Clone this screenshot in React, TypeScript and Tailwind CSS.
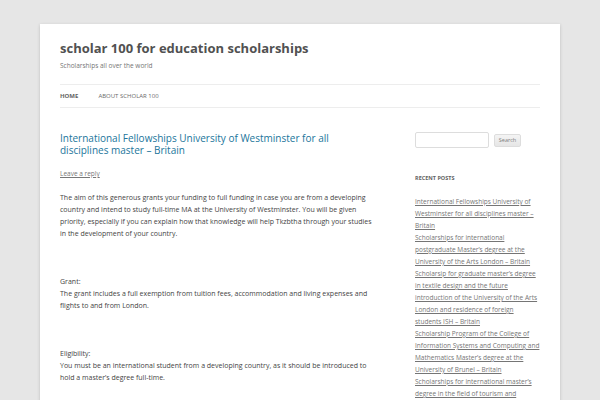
import React from 'react';

const recentPosts = [
  'International Fellowships University of Westminster for all disciplines master – Britain',
  'Scholarships for international postgraduate Master’s degree at the University of the Arts London – Britain',
  'Scholarsip for graduate master’s degree in textile design and the future introduction of the University of the Arts London and residence of foreign students ISH – Britain',
  'Scholarship Program of the College of Information Systems and Computing and Mathematics Master’s degree at the University of Brunel – Britain',
  'Scholarships for international master’s degree in the field of tourism and hospitality management – Britain',
];

export default function App() {
  return (
    <div className="min-h-screen bg-[#e6e6e6] py-[24px] font-['Open_Sans',sans-serif]">
      <div className="mx-[40px] bg-white px-[20px] pb-[24px] shadow-[0_1px_3px_rgba(100,100,100,0.3)]">
        {/* Header */}
        <header className="py-[12px]">
          <h1 className="text-[13px] leading-[24px] font-bold text-[#515151]">
            scholar 100 for education scholarships
          </h1>
          <h2 className="text-[6.5px] leading-[12px] text-[#757575]">Scholarships all over the world</h2>
          <nav className="mt-[12px] border-y border-[#ededed]">
            <ul className="flex text-[6px] leading-[22px] uppercase">
              <li className="mr-[20px] font-bold text-[#636363]">Home</li>
              <li className="text-[#6a6a6a]">About Scholar 100</li>
            </ul>
          </nav>
        </header>

        <div className="flex justify-between">
          {/* Post */}
          <main className="mt-[12px] w-[312px]">
            <h1 className="text-[10px] leading-[12px] text-[#21759b]">
              International Fellowships University of Westminster for all disciplines master – Britain
            </h1>
            <div className="mt-[12px] mb-[12px] text-[6.5px] leading-[12px] text-[#777] underline">Leave a reply</div>
            <div className="text-[7px] leading-[12px] text-[#444]">
              <p className="mb-[12px]">
                The aim of this generous grants your funding to full funding in case you are from a developing
                country and intend to study full-time MA at the University of Westminster. You will be given
                priority, especially if you can explain how that knowledge will help Tkzbtha through your studies
                in the development of your country.
              </p>
              <p className="mb-[12px]">&nbsp;</p>
              <p className="mb-[12px]">
                Grant:
                <br />
                The grant includes a full exemption from tuition fees, accommodation and living expenses and
                flights to and from London.
              </p>
              <p className="mb-[12px]">&nbsp;</p>
              <p className="mb-[12px]">
                Eligibility:
                <br />
                You must be an international student from a developing country, as it should be introduced to
                hold a master’s degree full-time.
              </p>
            </div>
          </main>

          {/* Sidebar */}
          <aside className="mt-[12px] w-[125px]">
            <form className="mb-[24px] flex items-center" onSubmit={(e) => e.preventDefault()}>
              <input
                type="text"
                className="h-[16px] w-[74px] rounded-[2px] border border-[#ddd] bg-white"
              />
              <button
                type="submit"
                className="ml-[5px] h-[13px] w-[27px] rounded-[2px] border border-[#ddd] bg-gradient-to-b from-[#f4f4f4] to-[#e6e6e6] text-[5.5px] leading-[11px] text-[#7c7c7c]"
              >
                Search
              </button>
            </form>
            <h3 className="mb-[12px] text-[5.5px] leading-[12px] font-bold uppercase text-[#636363]">Recent Posts</h3>
            <ul className="text-[6.5px] leading-[12px] text-[#757575]">
              {recentPosts.map((title) => (
                <li key={title} className="underline">
                  {title}
                </li>
              ))}
            </ul>
          </aside>
        </div>
      </div>
    </div>
  );
}
